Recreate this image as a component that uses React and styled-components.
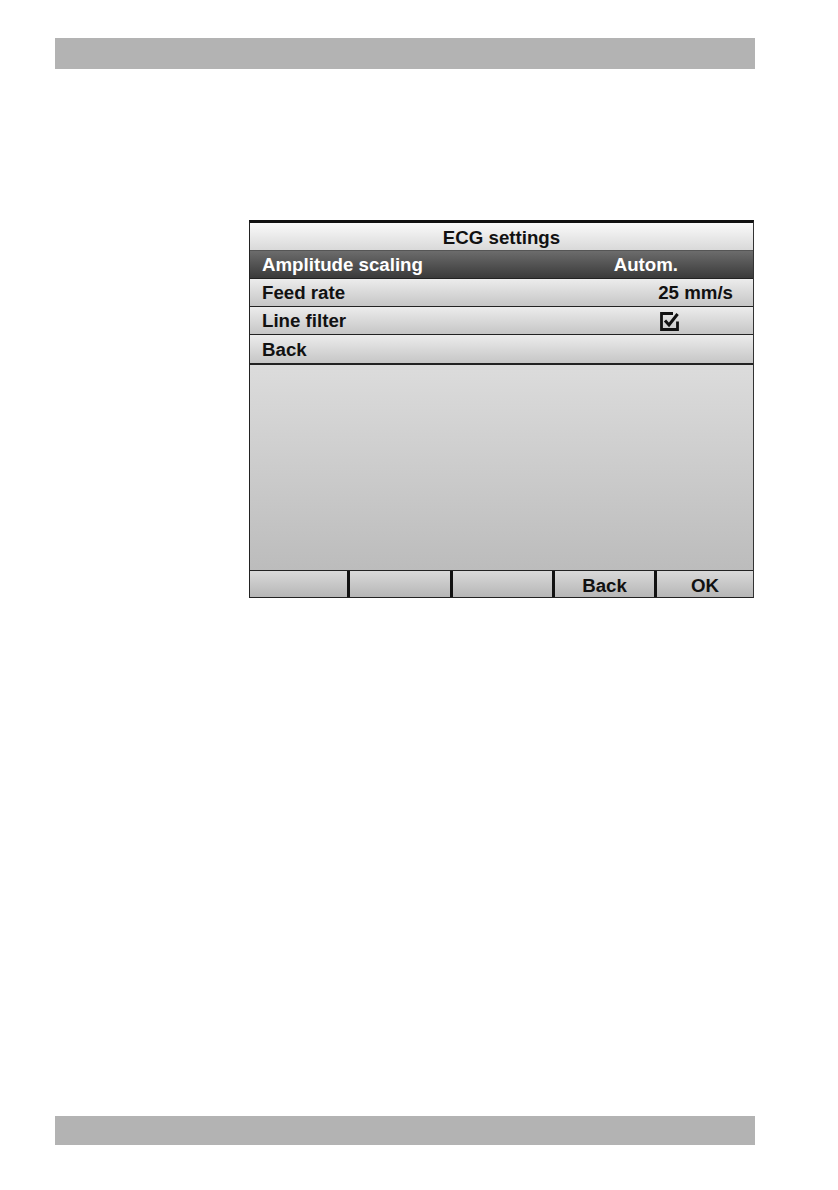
import React from 'react'
import styled, { createGlobalStyle } from 'styled-components'

const GlobalStyle = createGlobalStyle`
  html, body {
    margin: 0;
    padding: 0;
    background: #fff;
  }
  body {
    font-family: "Liberation Sans", Arial, sans-serif;
  }
`

const Page = styled.div`
  width: 838px;
  height: 1190px;
  display: flex;
  flex-direction: column;
  padding-top: 38px;
  box-sizing: border-box;
`

const GreyBar = styled.div`
  width: 700px;
  height: ${p => p.$h}px;
  margin-left: 55px;
  background: #b3b3b3;
`

const Screen = styled.div`
  width: 505px;
  height: 378px;
  margin: 151px 0 518px 249px;
  box-sizing: border-box;
  border-top: 3px solid #111;
  border-left: 1.5px solid #222;
  border-right: 1px solid #333;
  border-bottom: 1px solid #222;
  display: flex;
  flex-direction: column;
  font-weight: bold;
  font-size: 18.7px;
  color: #111;
`

const Title = styled.div`
  height: 28px;
  box-sizing: border-box;
  border-bottom: 1px solid #555;
  background: linear-gradient(#fafafa, #d9d9d9);
  display: flex;
  align-items: center;
  justify-content: center;
  padding-top: 2px;
`

const Row = styled.div`
  height: ${p => (p.$last ? 30 : 28)}px;
  box-sizing: border-box;
  border-bottom: ${p => (p.$last ? 2 : 1)}px solid #222;
  background: ${p =>
    p.$active
      ? 'linear-gradient(#6c6c6c, #3a3a3a)'
      : 'linear-gradient(#ececec, #c6c6c6)'};
  color: ${p => (p.$active ? '#fff' : '#111')};
  display: flex;
  align-items: center;
  justify-content: space-between;
  padding: 1px 20px 0 12px;
`

const Value = styled.span`
  margin-right: ${p => p.$inset || 0}px;
  display: flex;
  align-items: center;
`

const Empty = styled.div`
  height: 206px;
  box-sizing: border-box;
  border-bottom: 1px solid #222;
  background: linear-gradient(#dcdcdc, #bcbcbc);
`

const ButtonBar = styled.div`
  flex: 1;
  display: grid;
  grid-template-columns: 97px 103px 102px 102px 1fr;
`

const SoftKey = styled.div`
  background: linear-gradient(#d9d9d9, #b6b6b6);
  border-left: ${p => (p.$first ? 0 : 3)}px solid #111;
  display: flex;
  align-items: flex-end;
  justify-content: center;
  padding-bottom: 1px;
  line-height: 1;
`

const CheckIcon = () => (
  <svg width="19" height="19" viewBox="0 0 19 19">
    <path
      d="M13 1.5 H1.5 V17.5 H17.5 V9.5"
      fill="none"
      stroke="#111"
      strokeWidth="2.8"
    />
    <path
      d="M5 8.6 L9 13 L17.6 2"
      fill="none"
      stroke="#111"
      strokeWidth="3"
    />
  </svg>
)

const keys = ['', '', '', 'Back', 'OK']

export default function App() {
  return (
    <Page>
      <GlobalStyle />
      <GreyBar $h={31} />
      <Screen>
        <Title>ECG settings</Title>
        <Row $active>
          <span>Amplitude scaling</span>
          <Value $inset={55}>Autom.</Value>
        </Row>
        <Row>
          <span>Feed rate</span>
          <Value>25 mm/s</Value>
        </Row>
        <Row>
          <span>Line filter</span>
          <Value $inset={54}>
            <CheckIcon />
          </Value>
        </Row>
        <Row $last>
          <span>Back</span>
        </Row>
        <Empty />
        <ButtonBar>
          {keys.map((k, i) => (
            <SoftKey key={i} $first={i === 0}>
              {k}
            </SoftKey>
          ))}
        </ButtonBar>
      </Screen>
      <GreyBar $h={29} />
    </Page>
  )
}
